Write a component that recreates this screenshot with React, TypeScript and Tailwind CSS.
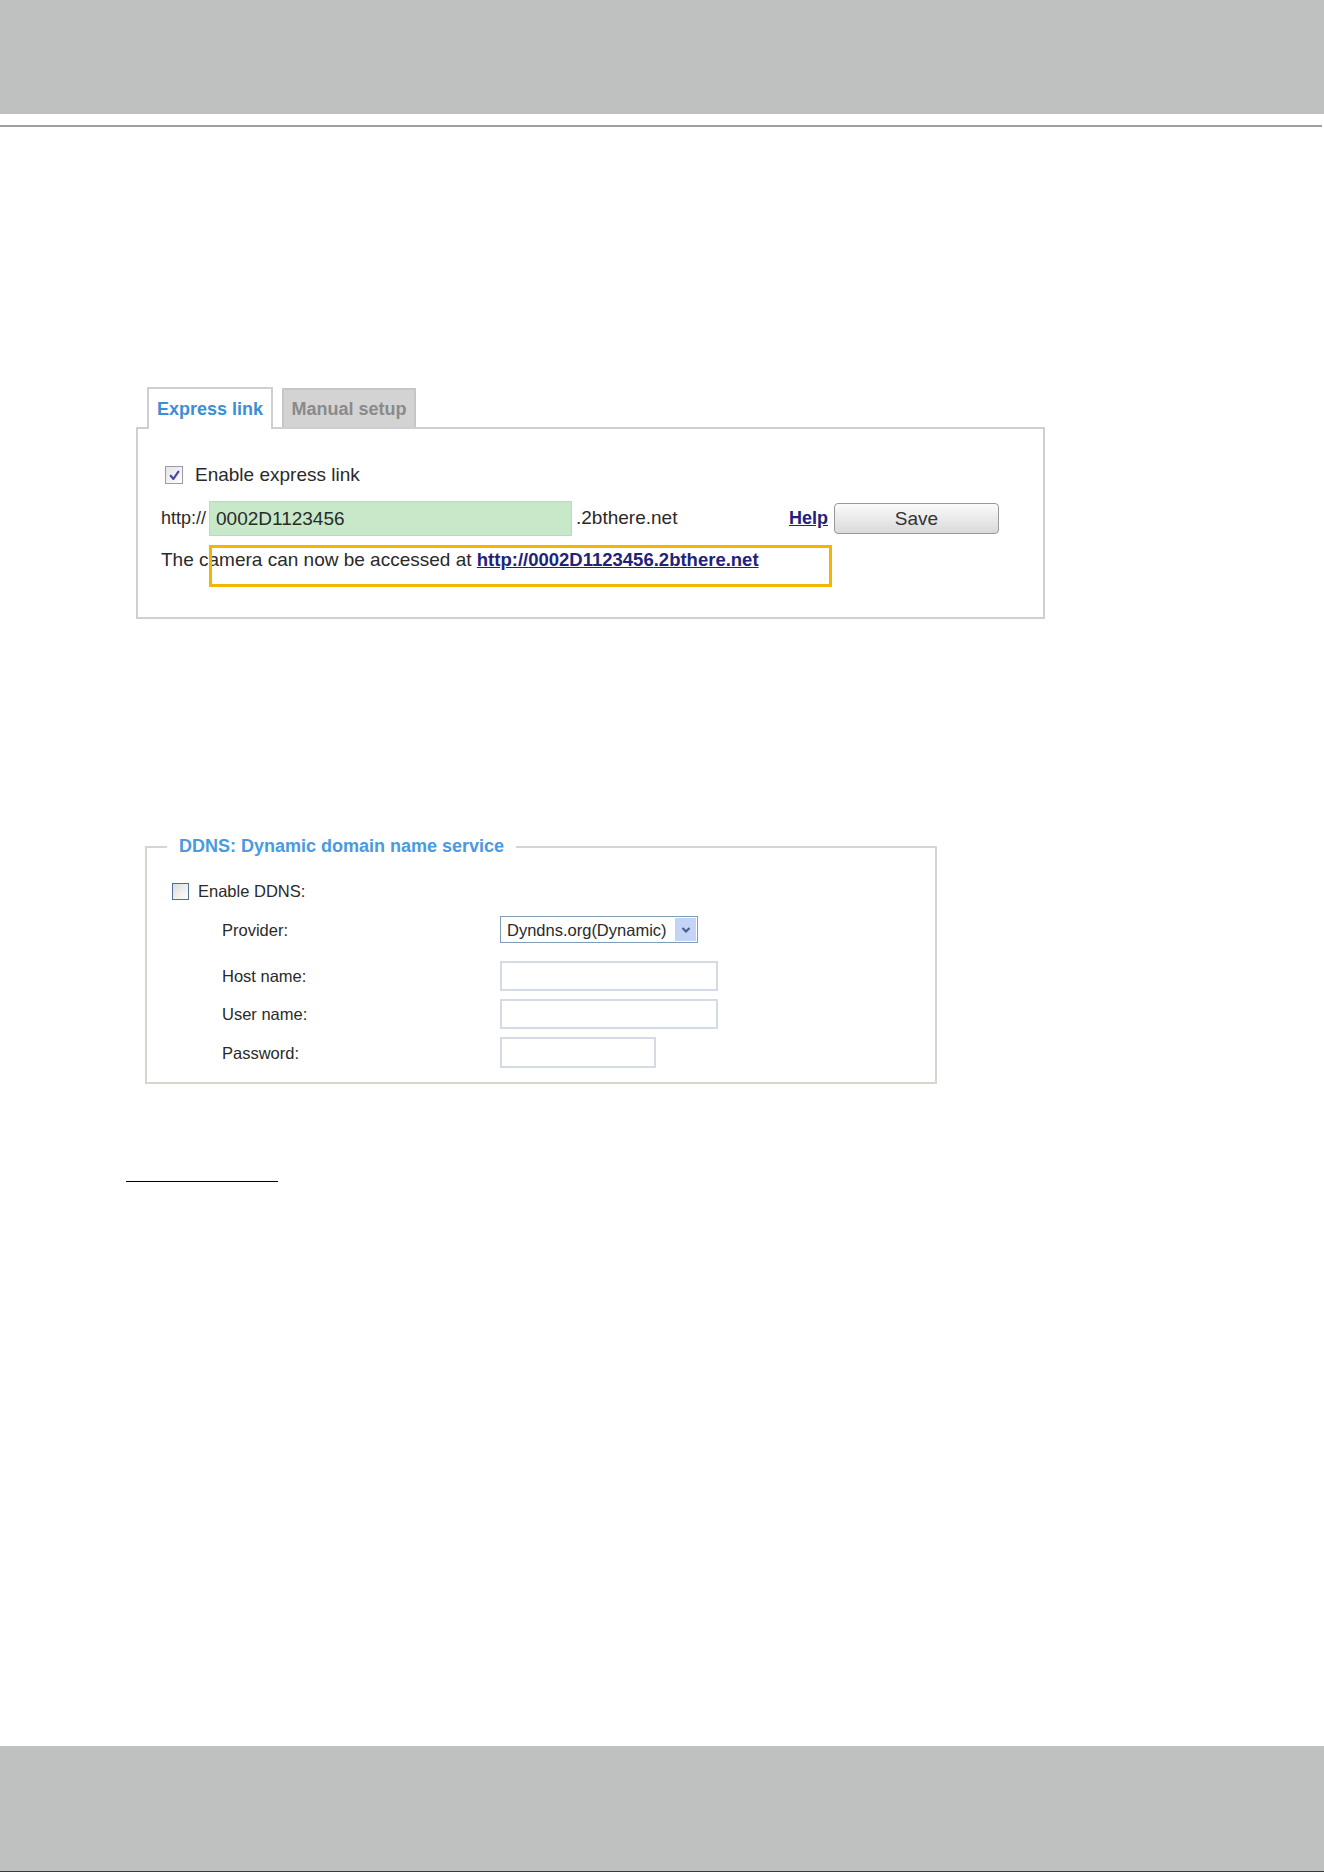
import React, { useState } from "react";

const font = "font-['Liberation_Sans',Arial,sans-serif]";

const CheckMark: React.FC = () => (
  <svg viewBox="0 0 12 12" className="h-[13px] w-[13px]">
    <path
      d="M2.5 6.2 L5 9.2 L9.6 2.4"
      fill="none"
      stroke="#4a4aa8"
      strokeWidth="2"
      strokeLinecap="round"
      strokeLinejoin="round"
    />
  </svg>
);

const ExpressLinkPanel: React.FC = () => {
  const [tab, setTab] = useState<"express" | "manual">("express");
  const [enabled, setEnabled] = useState(true);
  const [host, setHost] = useState("0002D1123456");

  return (
    <div className="ml-[136px] mt-[260px] w-[909px]">
      {/* tabs */}
      <div className="flex items-end gap-[9px] pl-[11px]">
        <button
          onClick={() => setTab("express")}
          className="relative z-10 -mb-[2px] flex h-[42px] w-[126px] items-start justify-center border-2 border-b-0 border-[#cfcfcf] bg-white pt-[9px] text-[18px] font-bold leading-[22px] text-[#3b8fd6]"
        >
          Express link
        </button>
        <button
          onClick={() => setTab("manual")}
          className="flex h-[39px] w-[134px] items-start justify-center border-2 border-b-0 border-[#c6c6c6] bg-[#d3d3d3] pt-[8px] text-[18px] font-bold leading-[22px] text-[#8a8a8a]"
        >
          Manual setup
        </button>
      </div>

      <div className="relative h-[192px] border-2 border-[#cfcfcf] bg-white text-[19px] text-[#2a2a2a]">
        {/* enable row */}
        <label className="ml-[27px] mt-[35px] flex h-[22px] items-center gap-[12px]">
          <span
            onClick={() => setEnabled(!enabled)}
            className="flex h-[18px] w-[18px] items-center justify-center border border-[#9a9aa8] bg-gradient-to-br from-[#e4e4ea] to-white"
          >
            {enabled && <CheckMark />}
          </span>
          <span className="leading-[22px]">Enable express link</span>
        </label>

        {/* host row */}
        <div className="ml-[23px] mt-[15px] flex h-[35px] items-center">
          <span className="w-[48px] text-[18px]">http://</span>
          <input
            value={host}
            onChange={(e) => setHost(e.target.value)}
            className="h-[35px] w-[363px] border border-[#bcd8be] bg-[#c7e9c9] pl-[6px] text-[19px] text-[#2a2a2a] outline-none"
          />
          <span className="ml-[4px] w-[213px]">.2bthere.net</span>
          <a href="#" className="w-[45px] text-[18px] font-bold text-[#22227a] underline">
            Help
          </a>
          <button className="h-[31px] w-[165px] rounded-[4px] border border-[#999] bg-gradient-to-b from-[#fbfbfb] to-[#d9d9d9] text-[19px] leading-[29px] text-[#333]">
            Save
          </button>
        </div>

        {/* access row */}
        <p className="ml-[23px] mt-[13px] leading-[22px]">
          The camera can now be accessed at{" "}
          <a href="#" className="text-[18.5px] font-bold text-[#22227a] underline">
            http://{host}.2bthere.net
          </a>
        </p>

        {/* highlight frame */}
        <div className="pointer-events-none absolute left-[71px] top-[116px] h-[42px] w-[623px] border-[3px] border-[#f4b400]" />
      </div>
    </div>
  );
};

const DdnsRow: React.FC<{ label: string; className?: string; children: React.ReactNode }> = ({
  label,
  className,
  children,
}) => (
  <div className={`flex items-center pl-[75px] ${className ?? ""}`}>
    <span className="w-[278px] text-[16.5px] leading-[20px]">{label}</span>
    {children}
  </div>
);

const DdnsFieldset: React.FC = () => {
  const [on, setOn] = useState(false);
  const inputCls = "h-[30px] border-2 border-[#d5dbe4] bg-white outline-none";

  return (
    <fieldset className="ml-[145px] mt-[217px] w-[792px] border-2 border-[#d8d5cf] pb-[14px] text-[#2a2a2a]">
      <legend className="ml-[20px] px-[12px] text-[18px] font-bold leading-[21px] text-[#4a9ae2]">
        DDNS: Dynamic domain name service
      </legend>

      <label className="ml-[25px] mt-[22px] flex h-[24px] items-center gap-[9px]">
        <span
          onClick={() => setOn(!on)}
          className="flex h-[17px] w-[17px] items-center justify-center border border-[#4f6f94] bg-gradient-to-br from-[#dcdcdc] to-white"
        >
          {on && <CheckMark />}
        </span>
        <span className="text-[16.5px]">Enable DDNS:</span>
      </label>

      <DdnsRow label="Provider:" className="mt-[13px]">
        <div className="flex h-[27px] w-[198px] items-center border border-[#7f9db9] bg-white">
          <span className="flex-1 pl-[6px] text-[16.5px] leading-[20px]">Dyndns.org(Dynamic)</span>
          <span className="mr-px flex h-[23px] w-[21px] items-center justify-center bg-[#c3d4f7]">
            <svg viewBox="0 0 12 12" className="h-[12px] w-[12px]">
              <path d="M2.5 4 L6 7.5 L9.5 4" fill="none" stroke="#4d5f86" strokeWidth="2.2" />
            </svg>
          </span>
        </div>
      </DdnsRow>

      <DdnsRow label="Host name:" className="mt-[18px]">
        <input className={`${inputCls} w-[218px]`} />
      </DdnsRow>
      <DdnsRow label="User name:" className="mt-[8px]">
        <input className={`${inputCls} w-[218px]`} />
      </DdnsRow>
      <DdnsRow label="Password:" className="mt-[8px]">
        <input type="password" className={`${inputCls} h-[31px] w-[156px]`} />
      </DdnsRow>
    </fieldset>
  );
};

export default function App() {
  return (
    <div className={`${font} flex h-[1872px] w-full flex-col bg-white`}>
      <div className="h-[114px] bg-[#bfc1c0]" />
      <div className="mr-[2px] mt-[11px] h-[2px] bg-[#a0a0a0]" />

      <ExpressLinkPanel />
      <DdnsFieldset />

      <div className="ml-[126px] mt-[97px] h-px w-[152px] bg-black" />

      <div className="mt-auto flex h-[126px] flex-col justify-end bg-[#bfc1c0]">
        <div className="h-px bg-[#3a3a3a]" />
      </div>
    </div>
  );
}
